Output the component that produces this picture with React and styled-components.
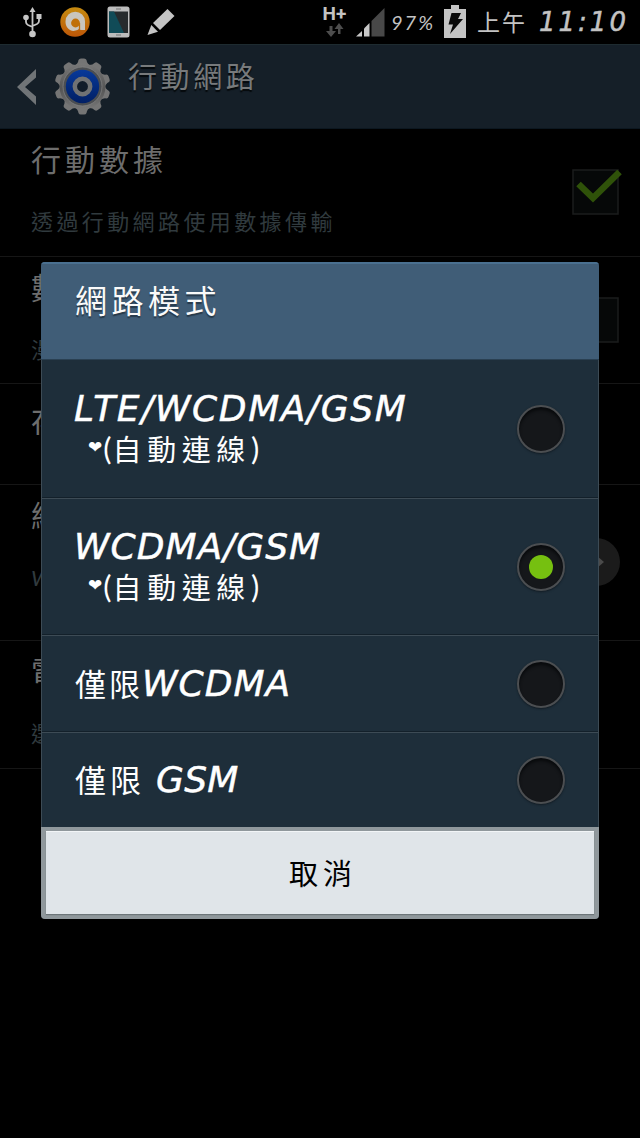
import styled, { createGlobalStyle } from "styled-components";

const GlobalStyle = createGlobalStyle`
  * {
    box-sizing: border-box;
  }

  body {
    margin: 0;
    background-color: #000;
    font-family: "Lato", "Noto Sans CJK TC", sans-serif;
  }
`;

const Screen = styled.div`
  position: relative;
  width: 640px;
  height: 1138px;
  overflow: hidden;
  background-color: #000;
`;

const StatusBar = styled.div`
  display: flex;
  justify-content: space-between;
  height: 44px;
  padding: 0 10px 0 22px;
  color: #c3c3c3;
`;

const StatusGroup = styled.div`
  display: flex;
  align-items: center;
  gap: ${({ $gap }) => $gap || 0}px;
`;

const StatusText = styled.span`
  width: ${({ $width }) => $width}px;
  margin-left: ${({ $left }) => $left}px;
  font-family: ${({ $font }) => $font || "Lato"}, "Noto Sans CJK TC", sans-serif;
  font-size: ${({ $size }) => $size}px;
  font-style: ${({ $italic }) => ($italic ? "italic" : "normal")};
  line-height: 44px;
  letter-spacing: ${({ $spacing }) => $spacing || 0}px;
  white-space: nowrap;
  -webkit-text-stroke: ${({ $stroke }) => $stroke || 0}px currentColor;
`;

const Network = styled.div`
  display: flex;
  flex-direction: column;
  align-items: center;
  width: 23px;
  margin-top: -3px;
  font-family: Roboto, sans-serif;
  font-size: 19px;
  font-weight: 700;
  line-height: 18px;
`;

const ActionBar = styled.div`
  display: flex;
  height: 85px;
  padding: 13px 0 0 16px;
  background-color: #151f28;
  border-top: 1px solid #1e2b30;
  border-bottom: 1px solid #0c1720;
`;

const BarTitle = styled.h1`
  margin: -1px 0 0 17px;
  color: #777a7c;
  font-size: 29px;
  font-weight: 400;
  line-height: 40px;
  letter-spacing: 3.6px;
  text-shadow: 0 2px 1px #05090c;
`;

const Item = styled.div`
  display: flex;
  justify-content: space-between;
  height: ${({ $height }) => $height}px;
  padding: ${({ $top }) => $top || 10}px 20px 0 31px;
  border-bottom: 1px solid #161616;
`;

const ItemTitle = styled.div`
  color: #6d6d6d;
  font-size: 30px;
  line-height: 40px;
  letter-spacing: 4px;
`;

const ItemSummary = styled.div`
  margin-top: 28px;
  color: #303a3e;
  font-size: 22px;
  line-height: 30px;
  letter-spacing: 3.4px;
  white-space: pre-line;
`;

const CheckSlot = styled.div`
  width: 48px;
  height: 50px;
  margin-top: 26px;
`;

const MoreButton = styled.div`
  display: flex;
  align-items: center;
  justify-content: center;
  width: 48px;
  height: 48px;
  margin-top: 43px;
  border-radius: 50%;
  background-color: #1b1b1b;
`;

const Dialog = styled.div`
  position: absolute;
  top: 262px;
  left: 41px;
  width: 558px;
  height: 657px;
  overflow: hidden;
  border-radius: 4px;
  background-color: #1e2e3a;
`;

const DialogTitle = styled.h2`
  height: 98px;
  margin: 0;
  padding: 15px 34px;
  background-color: #405d77;
  border-top: 2px solid #4a7090;
  border-bottom: 1px solid #2a4052;
  color: #fafafa;
  font-size: 32px;
  font-weight: 400;
  line-height: 44px;
  letter-spacing: 4.5px;
  text-shadow: 0 2px 1px #26394a;
`;

const Option = styled.div`
  display: flex;
  align-items: center;
  justify-content: space-between;
  height: ${({ $height }) => $height}px;
  padding: 0 33px;
  border: solid #3d4b55;
  border-width: 0 1px ${({ $last }) => ($last ? 0 : 1)}px;
  box-shadow: ${({ $last }) => ($last ? "none" : "inset 0 -1px #13202a")};
  color: #fff;
`;

const OptionLabel = styled.div`
  display: flex;
  flex-direction: column;
`;

const Line = styled.div`
  display: flex;
  align-items: center;
  height: 40px;
  white-space: pre;
`;

const Latin = styled.span`
  margin-left: -1px;
  font-family: "DejaVu Sans", sans-serif;
  font-size: 36px;
  font-style: italic;
  line-height: 40px;
  letter-spacing: ${({ $spacing }) => $spacing || 1}px;
  -webkit-text-stroke: 0.5px currentColor;
`;

const Han = styled.span`
  margin-top: -3px;
  font-size: ${({ $size }) => $size || 31}px;
  letter-spacing: ${({ $spacing }) => $spacing || 3}px;
`;

const Heart = styled.span`
  margin: -4px 1px 0 13px;
  font-family: "DejaVu Sans", sans-serif;
  font-size: 17px;
`;

const Radio = styled.div`
  display: flex;
  align-items: center;
  justify-content: center;
  width: 48px;
  height: 48px;
  border: 2px solid #4b4e51;
  border-radius: 50%;
  background-color: #15171a;
  box-shadow: inset 0 3px 3px #090b0d, 0 1px 2px #121c24;
`;

const Dot = styled.div`
  width: 24px;
  height: 24px;
  border-radius: 50%;
  background-color: #76c010;
`;

const Footer = styled.div`
  height: 92px;
  padding: 4px 5px 5px;
  background-color: #90989c;
`;

const CancelButton = styled.button`
  display: block;
  width: 100%;
  height: 83px;
  padding: 0 0 2px 6px;
  border: 0;
  border-top: 1px solid #f2f5f7;
  background-color: #e0e5e9;
  box-shadow: 0 1px 1px #6d7579;
  color: #000;
  font-family: "Noto Sans CJK TC", sans-serif;
  font-size: 29px;
  letter-spacing: 5px;
`;

const UsbIcon = () => (
  <svg width="21" height="32" viewBox="0 0 21 32" fill="#c6c6c6">
    <path
      d="M10.500 5V27M4 12v4q0 2 2 3l4.500 2M17 10v5q0 2-2 3l-4.500 2"
      fill="none"
      stroke="#c6c6c6"
      strokeWidth="1.800"
    />
    <path d="M10.500 1L13.500 6h-6z" />
    <circle cx="4" cy="11.500" r="2.800" />
    <rect x="14.500" y="8" width="5" height="5" />
    <circle cx="10.500" cy="28" r="3.300" />
  </svg>
);

const AvastIcon = () => (
  <svg width="30" height="30" viewBox="0 0 30 30">
    <defs>
      <linearGradient id="orange" x2="0" y2="1">
        <stop stopColor="#c58b10" />
        <stop offset="1" stopColor="#bd5708" />
      </linearGradient>
    </defs>
    <circle cx="15" cy="15" r="14.700" fill="url(#orange)" />
    <path
      d="M11 23.500C7.500 22 5.500 18.500 5.500 14.500A9.700 9.700 0 0 1 25 14.500V23H21.500Q20 23 19.500 21.500Q17.500 23.500 15.500 23.500A7 7 0 0 1 11 23.500z"
      fill="#c9c5bd"
    />
    <circle cx="15.500" cy="16" r="4.400" fill="#c07009" />
    <path d="M19.500 16V22" stroke="#c07009" strokeWidth="1.300" />
  </svg>
);

const PhoneIcon = () => (
  <svg width="23" height="32" viewBox="0 0 23 32">
    <rect x=".5" y=".5" width="22" height="31" rx="2.500" fill="#bcbcbc" />
    <rect x="2" y="5.500" width="19" height="21.500" fill="#272b2d" />
    <path d="M2 5.500h5L17 27H2z" fill="#114b57" />
    <path d="M9 3h5M9 29h5" stroke="#8a8a8a" strokeWidth="1.500" />
  </svg>
);

const PencilIcon = () => (
  <svg width="28" height="28" viewBox="0 0 28 28" fill="#c4c4c4">
    <path d="M20.500 1L27.500 8L13 22L6 15z" />
    <path d="M4.300 17L11 23.700L.5 27z" />
  </svg>
);

const SignalIcon = () => (
  <svg width="29" height="29" viewBox="0 0 29 29" style={{ marginLeft: 10 }}>
    <path d="M0 28.500L6 23v5.500z" fill="#c8c8c8" />
    <path d="M8 20.500L13.500 15v13.500H8z" fill="#c8c8c8" />
    <path d="M15.500 13L28.500 0v28.500h-13z" fill="#484848" />
  </svg>
);

const BatteryIcon = () => (
  <svg width="22" height="33" viewBox="0 0 22 33" style={{ marginLeft: 8, marginTop: -2 }}>
    <path d="M7 0h8v4h7v29H0V4h7z" fill="#c4c4c4" />
    <path d="M7.500 8H17l-3 6h5L6 29l3-9.500H4.500z" fill="#0a0a0a" />
  </svg>
);

const DataArrows = () => (
  <svg width="18" height="14" viewBox="0 0 18 14" fill="#4d4d4d">
    <path d="M3.500 3h3v5H10l-5 6-5-6h3.500z" />
    <path d="M12 11V6H8.500L13 0l4.500 6H14.500v5z" />
  </svg>
);

const BackIcon = () => (
  <svg width="21" height="36" viewBox="0 0 21 36" style={{ marginTop: 11 }}>
    <path d="M20 0v8.500L9 18l11 9.500V36L1 18z" fill="#707477" />
  </svg>
);

const TEETH = Array.from({ length: 10 }, (_, i) => i * 36);

const GearIcon = () => (
  <svg width="57" height="57" viewBox="0 0 57 57" style={{ marginLeft: 17 }}>
    <defs>
      <linearGradient id="metal" x2="0" y2="1">
        <stop stopColor="#787878" />
        <stop offset=".55" stopColor="#555" />
        <stop offset="1" stopColor="#777" />
      </linearGradient>
      <linearGradient id="blue" x2="0" y2="1">
        <stop stopColor="#07399a" />
        <stop offset="1" stopColor="#011f64" />
      </linearGradient>
    </defs>
    {TEETH.map((angle) => (
      <path
        key={angle}
        d="M20 8Q24 6 24.500 2Q25 .500 27 .500H30Q32 .500 32.500 2Q33 6 37 8V14H20z"
        fill="#757575"
        transform={`rotate(${angle} 28.500 28.500)`}
      />
    ))}
    <circle cx="28.500" cy="28.500" r="23" fill="url(#metal)" />
    <circle cx="28.500" cy="28.500" r="19.500" fill="#4b4e52" stroke="#858585" strokeWidth=".7" />
    <circle cx="28.500" cy="28.500" r="16.700" fill="url(#blue)" />
    <circle cx="28.500" cy="28.500" r="7.700" fill="#111c29" stroke="#707274" strokeWidth="4.500" />
  </svg>
);

const CheckBox = ({ checked }) => (
  <CheckSlot>
    <svg width="50" height="50" viewBox="0 0 50 50">
      <rect x="1" y="5" width="45" height="44" fill="#060808" stroke="#1b1d1d" strokeWidth="1.500" />
      {checked && (
        <path d="M6.500 19L21 33L47.500 7" fill="none" stroke="#2f5209" strokeWidth="6.500" />
      )}
    </svg>
  </CheckSlot>
);

const AutoLine = () => (
  <Line>
    <Heart>❤</Heart>
    <Han $size={31} $spacing={1}>(</Han>
    <Han $size={29} $spacing={5.6}>自動連線</Han>
    <Han $size={31}>)</Han>
  </Line>
);

const App = () => {
  return (
    <Screen>
      <GlobalStyle />
      <StatusBar>
        <StatusGroup $gap={17}>
          <UsbIcon />
          <AvastIcon />
          <PhoneIcon />
          <PencilIcon />
        </StatusGroup>
        <StatusGroup>
          <Network>
            H+
            <DataArrows />
          </Network>
          <SignalIcon />
          <StatusText $width={45} $left={6} $size={20} $italic $spacing={2}>97%</StatusText>
          <BatteryIcon />
          <StatusText $width={50} $left={11} $size={23} $spacing={2}>上午</StatusText>
          <StatusText $width={91} $left={12} $size={26} $italic $font='"DejaVu Sans"' $spacing={3} $stroke={0.5}>
            11:10
          </StatusText>
        </StatusGroup>
      </StatusBar>
      <ActionBar>
        <BackIcon />
        <GearIcon />
        <BarTitle>行動網路</BarTitle>
      </ActionBar>

      <Item $height={128}>
        <div>
          <ItemTitle>行動數據</ItemTitle>
          <ItemSummary>透過行動網路使用數據傳輸</ItemSummary>
        </div>
        <CheckBox checked />
      </Item>
      <Item $height={127}>
        <div>
          <ItemTitle>數據漫遊</ItemTitle>
          <ItemSummary>漫遊時連接至數據服務</ItemSummary>
        </div>
        <CheckBox />
      </Item>
      <Item $height={101} $top={16}>
        <ItemTitle>存取點名稱</ItemTitle>
      </Item>
      <Item $height={156}>
        <div>
          <ItemTitle>網路模式</ItemTitle>
          <ItemSummary>
            <i>WCDMA/GSM</i>
            {"\n\u00a0❤(自動連線)"}
          </ItemSummary>
        </div>
        <MoreButton>
          <svg width="16" height="16" viewBox="0 0 16 16">
            <path d="M9 2v12L16 8z" fill="#4a4a4a" />
          </svg>
        </MoreButton>
      </Item>
      <Item $height={128}>
        <div>
          <ItemTitle>電信業者</ItemTitle>
          <ItemSummary>選擇網路業者</ItemSummary>
        </div>
      </Item>

      <Dialog>
        <DialogTitle>網路模式</DialogTitle>
        <Option $height={139}>
          <OptionLabel>
            <Line><Latin $spacing={1.6}>LTE/WCDMA/GSM</Latin></Line>
            <AutoLine />
          </OptionLabel>
          <Radio />
        </Option>
        <Option $height={137}>
          <OptionLabel>
            <Line><Latin>WCDMA/GSM</Latin></Line>
            <AutoLine />
          </OptionLabel>
          <Radio><Dot /></Radio>
        </Option>
        <Option $height={97}>
          <Line>
            <Han>僅限</Han>
            <Latin>WCDMA</Latin>
          </Line>
          <Radio />
        </Option>
        <Option $height={94} $last>
          <Line>
            <Han $spacing={4}>僅限 </Han>
            <Latin $spacing={0.3}>GSM</Latin>
          </Line>
          <Radio />
        </Option>
        <Footer>
          <CancelButton>取消</CancelButton>
        </Footer>
      </Dialog>
    </Screen>
  );
};

export default App;
